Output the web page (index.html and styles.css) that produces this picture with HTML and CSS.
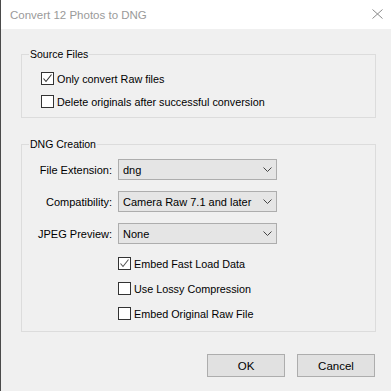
FILE: index.html
```html
<!DOCTYPE html>
<html lang="en">
<head>
  <meta charset="UTF-8" />
  <title>Convert 12 Photos to DNG</title>
  <link rel="stylesheet" href="styles.css">
</head>
<body>

<div class="window">
  <div class="titlebar">
    <span class="title">Convert 12 Photos to DNG</span>
    <svg class="close" width="11" height="10" viewBox="0 0 11 10">
      <path d="M0.5 0.5 L10.5 9.5 M10.5 0.5 L0.5 9.5" stroke="#8a8a8a" stroke-width="1" fill="none"/>
    </svg>
  </div>

  <main class="content">
    <fieldset class="group source">
      <legend>Source Files</legend>
      <label class="check">
        <span class="box checked">
          <svg width="11" height="11" viewBox="0 0 11 11"><path d="M1.5 5.5 L4 8.5 L9.5 1.5" stroke="#333" stroke-width="1.1" fill="none"/></svg>
        </span>
        Only convert Raw files
      </label>
      <label class="check">
        <span class="box"></span>
        Delete originals after successful conversion
      </label>
    </fieldset>

    <fieldset class="group creation">
      <legend>DNG Creation</legend>
      <div class="fields">
        <span class="field-label">File Extension:</span>
        <div class="select"><span>dng</span><svg width="9" height="5" viewBox="0 0 9 5"><path d="M0.5 0.5 L4.5 4.5 L8.5 0.5" stroke="#444" fill="none"/></svg></div>

        <span class="field-label">Compatibility:</span>
        <div class="select"><span>Camera Raw 7.1 and later</span><svg width="9" height="5" viewBox="0 0 9 5"><path d="M0.5 0.5 L4.5 4.5 L8.5 0.5" stroke="#444" fill="none"/></svg></div>

        <span class="field-label">JPEG Preview:</span>
        <div class="select"><span>None</span><svg width="9" height="5" viewBox="0 0 9 5"><path d="M0.5 0.5 L4.5 4.5 L8.5 0.5" stroke="#444" fill="none"/></svg></div>
      </div>

      <div class="options">
        <label class="check">
          <span class="box checked">
            <svg width="11" height="11" viewBox="0 0 11 11"><path d="M1.5 5.5 L4 8.5 L9.5 1.5" stroke="#555" stroke-width="1.1" fill="none"/></svg>
          </span>
          Embed Fast Load Data
        </label>
        <label class="check">
          <span class="box"></span>
          Use Lossy Compression
        </label>
        <label class="check">
          <span class="box"></span>
          Embed Original Raw File
        </label>
      </div>
    </fieldset>

    <div class="buttons">
      <button>OK</button>
      <button>Cancel</button>
    </div>
  </main>
</div>

</body>
</html>
```

FILE: styles.css
```css
body {
  margin: 0;
  background: #f0f0f0;
  font-family: 'Liberation Sans', Arial, sans-serif;
  font-size: 10.8px;
  color: #000;
}

.window {
  border-left: 1px solid #4a4a4a;
  height: 391px;
  box-sizing: border-box;
}

.titlebar {
  height: 29px;
  background: #fff;
  display: flex;
  align-items: center;
  justify-content: space-between;
  padding: 0 8px 0 9px;
}

.title {
  font-size: 11.5px;
  color: #9a9a9a;
}

.close {
  margin-top: -1px;
}

.content {
  padding: 0 15px 0 20px;
}

.group {
  margin: 0;
  border: 1px solid #dcdcdc;
  padding: 6px 0 4px 7px;
}

.group legend {
  font-size: 10.5px;
  line-height: 14px;
  padding: 0 1px;
}

.source {
  margin-top: 18px;
}

.creation {
  margin-top: 19px;
  padding-top: 8px;
  padding-bottom: 5px;
}

.check {
  display: flex;
  align-items: center;
  gap: 3px;
  height: 23px;
  margin-left: 12px;
}

.box {
  width: 11px;
  height: 11px;
  border: 1px solid #333;
  background: #fff;
  display: flex;
  align-items: center;
  justify-content: center;
  flex-shrink: 0;
}

.fields {
  display: grid;
  grid-template-columns: 89px 159px;
  row-gap: 11px;
  align-items: center;
}

.field-label {
  text-align: right;
  padding-right: 6px;
  font-size: 11px;
}

.select {
  height: 21px;
  box-sizing: border-box;
  border: 1px solid #adadad;
  background: #e5e5e5;
  display: flex;
  align-items: center;
  justify-content: space-between;
  padding: 0 4px 0 4px;
  font-size: 11px;
}

.options {
  margin-top: 7px;
  margin-left: 77px;
}

.options .check {
  height: 25px;
}

.buttons {
  display: flex;
  justify-content: flex-end;
  gap: 12px;
  margin-top: 22px;
  padding-right: 1px;
}

.buttons button {
  width: 78px;
  height: 23px;
  border: 1px solid #adadad;
  background: #e1e1e1;
  font-family: 'Liberation Sans', Arial, sans-serif;
  font-size: 11.5px;
  color: #000;
  padding: 0;
}
```
